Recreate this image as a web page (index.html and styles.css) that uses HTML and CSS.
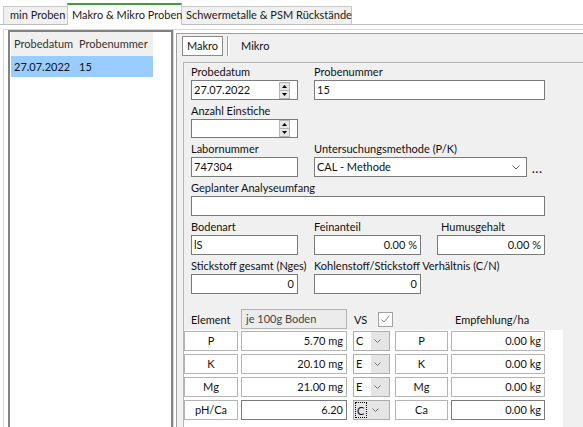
FILE: index.html
```html
<!DOCTYPE html>
<html lang="de">
<head>
    <meta charset="UTF-8">
    <title>Makro &amp; Mikro Proben</title>
    <link rel="stylesheet" href="styles.css">
</head>
<body>
    <div class="tabstrip">
        <div class="tab tab-first">min Proben</div>
        <div class="tab tab-active">Makro &amp; Mikro Proben</div>
        <div class="tab tab-last">Schwermetalle &amp; PSM Rückstände</div>
    </div>
    <div class="page">
        <div class="list">
            <div class="list-head"><span class="col-date">Probedatum</span><span>Probenummer</span></div>
            <div class="list-row selected"><span class="col-date">27.07.2022</span><span>15</span></div>
        </div>
        <div class="splitter"></div>
        <div class="panel">
            <div class="subtabs">
                <div class="subtab active">Makro</div>
                <div class="subtab-sep"></div>
                <div class="subtab">Mikro</div>
            </div>
            <div class="subpage">
                <div class="form">
                    <div class="row">
                        <div class="field">
                            <label>Probedatum</label>
                            <div class="input">
                                <span>27.07.2022</span>
                                <svg class="spin" width="11" height="17" viewBox="0 0 11 17">
                                    <rect x="0.5" y="0.5" width="10" height="16" fill="#e6e6e6" stroke="#b5b5b5"/>
                                    <line x1="0" y1="8.5" x2="11" y2="8.5" stroke="#b5b5b5"/>
                                    <polygon points="3,6 8,6 5.5,3" fill="#000"/>
                                    <polygon points="3,11 8,11 5.5,14" fill="#000"/>
                                </svg>
                            </div>
                        </div>
                        <div class="field wide">
                            <label>Probenummer</label>
                            <div class="input"><span>15</span></div>
                        </div>
                    </div>
                    <div class="row">
                        <div class="field">
                            <label>Anzahl Einstiche</label>
                            <div class="input short">
                                <span></span>
                                <svg class="spin" width="11" height="17" viewBox="0 0 11 17">
                                    <rect x="0.5" y="0.5" width="10" height="16" fill="#e6e6e6" stroke="#b5b5b5"/>
                                    <line x1="0" y1="8.5" x2="11" y2="8.5" stroke="#b5b5b5"/>
                                    <polygon points="3,6 8,6 5.5,3" fill="#000"/>
                                    <polygon points="3,11 8,11 5.5,14" fill="#000"/>
                                </svg>
                            </div>
                        </div>
                    </div>
                    <div class="row">
                        <div class="field">
                            <label>Labornummer</label>
                            <div class="input"><span>747304</span></div>
                        </div>
                        <div class="field wide">
                            <label>Untersuchungsmethode (P/K)</label>
                            <div class="select-line">
                                <div class="input select">
                                    <span>CAL - Methode</span>
                                    <svg class="chevron" width="8" height="5" viewBox="0 0 8 5">
                                        <polyline points="0.5,0.5 4,4 7.5,0.5" fill="none" stroke="#606060"/>
                                    </svg>
                                </div>
                                <span class="more">...</span>
                            </div>
                        </div>
                    </div>
                    <div class="row">
                        <div class="field full">
                            <label>Geplanter Analyseumfang</label>
                            <div class="input"><span></span></div>
                        </div>
                    </div>
                    <div class="row">
                        <div class="field">
                            <label>Bodenart</label>
                            <div class="input"><span>lS</span></div>
                        </div>
                        <div class="field">
                            <label>Feinanteil</label>
                            <div class="input num"><span>0.00 %</span></div>
                        </div>
                        <div class="field third">
                            <label class="indent">Humusgehalt</label>
                            <div class="input num"><span>0.00 %</span></div>
                        </div>
                    </div>
                    <div class="row">
                        <div class="field">
                            <label>Stickstoff gesamt (Nges)</label>
                            <div class="input num"><span>0</span></div>
                        </div>
                        <div class="field">
                            <label>Kohlenstoff/Stickstoff Verhältnis (C/N)</label>
                            <div class="input num"><span>0</span></div>
                        </div>
                    </div>
                </div>

                <div class="table-head">
                    <span class="th-element">Element</span>
                    <span class="unit-box">je 100g Boden</span>
                    <span class="th-vs">VS</span>
                    <svg class="check" width="15" height="15" viewBox="0 0 15 15">
                        <rect x="0.5" y="0.5" width="14" height="14" fill="#fff" stroke="#a0a0a0"/>
                        <polyline points="3.5,7.5 6,10 11.5,3.5" fill="none" stroke="#8c8c8c"/>
                    </svg>
                    <span class="th-empf">Empfehlung/ha</span>
                </div>

                <div class="table">
                    <div class="trow">
                        <div class="cell c-label">P</div>
                        <div class="cell c-val">5.70 mg</div>
                        <div class="combo">
                            <span class="combo-text">C</span>
                            <span class="combo-btn"><svg width="7" height="4" viewBox="0 0 7 4"><polyline points="0.5,0.5 3.5,3.5 6.5,0.5" fill="none" stroke="#707070"/></svg></span>
                        </div>
                        <div class="cell c-label2">P</div>
                        <div class="cell c-val2">0.00 kg</div>
                    </div>
                    <div class="trow">
                        <div class="cell c-label">K</div>
                        <div class="cell c-val">20.10 mg</div>
                        <div class="combo">
                            <span class="combo-text">E</span>
                            <span class="combo-btn"><svg width="7" height="4" viewBox="0 0 7 4"><polyline points="0.5,0.5 3.5,3.5 6.5,0.5" fill="none" stroke="#707070"/></svg></span>
                        </div>
                        <div class="cell c-label2">K</div>
                        <div class="cell c-val2">0.00 kg</div>
                    </div>
                    <div class="trow">
                        <div class="cell c-label">Mg</div>
                        <div class="cell c-val">21.00 mg</div>
                        <div class="combo">
                            <span class="combo-text">E</span>
                            <span class="combo-btn"><svg width="7" height="4" viewBox="0 0 7 4"><polyline points="0.5,0.5 3.5,3.5 6.5,0.5" fill="none" stroke="#707070"/></svg></span>
                        </div>
                        <div class="cell c-label2">Mg</div>
                        <div class="cell c-val2">0.00 kg</div>
                    </div>
                    <div class="trow">
                        <div class="cell c-label">pH/Ca</div>
                        <div class="cell c-val dark">6.20</div>
                        <div class="combo focus">
                            <span class="combo-text">C</span>
                            <span class="combo-btn"><svg width="7" height="4" viewBox="0 0 7 4"><polyline points="0.5,0.5 3.5,3.5 6.5,0.5" fill="none" stroke="#707070"/></svg></span>
                        </div>
                        <div class="cell c-label2">Ca</div>
                        <div class="cell c-val2 dark">0.00 kg</div>
                    </div>
                </div>
            </div>
        </div>
    </div>
</body>
</html>
```

FILE: styles.css
```css
body {
    margin: 0;
    width: 583px;
    height: 427px;
    overflow: hidden;
    background-color: #fff;
    font-family: Lato, "Liberation Sans", sans-serif;
    font-size: 11px;
    color: #111;
}

/* top tab strip */
.tabstrip {
    display: flex;
    align-items: flex-end;
    height: 21px;
    padding: 3px 0 0 3px;
    border-bottom: 1px solid #bdbdbd;
}
.tab {
    box-sizing: border-box;
    height: 18px;
    line-height: 16px;
    padding-left: 6px;
    background-color: #f0f0f0;
    border-top: 1px solid #c8c8c8;
    color: #1a1a1a;
    white-space: nowrap;
}
.tab-first {
    width: 64px;
    border-left: 1px solid #c8c8c8;
}
.tab-active {
    width: 115px;
    height: 22px;
    margin-bottom: -1px;
    padding-top: 2px;
    padding-left: 4px;
    background-color: #fff;
    border-top: 2px solid #3c9e3c;
    border-left: 1px solid #c8c8c8;
    border-right: 1px solid #c8c8c8;
}
.tab-last {
    width: 170px;
    padding-left: 4px;
    border-right: 1px solid #c8c8c8;
}

.page {
    display: flex;
    align-items: flex-start;
    height: 397px;
    overflow: hidden;
    margin: 4px 0 0 3px;
    border-top: 1px solid #d4d4d4;
    border-left: 1px solid #d4d4d4;
}

/* sample list on the left */
.list {
    box-sizing: border-box;
    width: 165px;
    height: 397px;
    margin-left: 4px;
    padding-left: 1px;
    background-color: #fff;
    border: 2px solid #828282;
    border-bottom: none;
}
.list-head, .list-row {
    display: flex;
    width: 142px;
    white-space: nowrap;
}
.list-head {
    height: 24px;
    line-height: 24px;
    background-color: #f0f0f0;
    color: #333;
}
.list-row {
    height: 21px;
    line-height: 21px;
}
.list-row.selected {
    background-color: #99ccff;
}
.col-date {
    box-sizing: border-box;
    width: 68px;
    padding-left: 3px;
}
.splitter {
    box-sizing: border-box;
    width: 3px;
    height: 397px;
    border-left: 1px solid #d9d9d9;
}

/* right panel */
.panel {
    flex: 1;
    height: 394px;
    margin-top: 3px;
    background-color: #f0f0f0;
    border-top: 1px solid #a0a0a0;
    border-left: 1px solid #a0a0a0;
}
.subtabs {
    box-sizing: border-box;
    display: flex;
    align-items: flex-start;
    height: 28px;
    padding: 2px 0 0 5px;
}
.subtab {
    line-height: 20px;
    margin-left: 12px;
}
.subtab.active {
    box-sizing: border-box;
    width: 41px;
    height: 20px;
    margin-left: 0;
    line-height: 18px;
    text-align: center;
    background-color: #fff;
    border: 1px solid #8a8a8a;
}
.subtab-sep {
    width: 0;
    height: 20px;
    margin-left: 4px;
    border-left: 1px solid #a0a0a0;
    border-right: 1px solid #fff;
}
.subpage {
    height: 365px;
    margin-left: 6px;
    border-top: 1px solid #b4b4b4;
    border-left: 1px solid #b4b4b4;
}

.form {
    display: flex;
    flex-direction: column;
    gap: 3px;
    padding: 1px 0 0 7px;
}
.row {
    display: flex;
    gap: 16px;
}
.field {
    display: flex;
    flex-direction: column;
    width: 107px;
}
.field.wide { width: 231px; }
.field.full { width: 354px; }
.field.third { width: 108px; }
.field label {
    height: 16px;
    line-height: 16px;
    white-space: nowrap;
}
.field label.indent {
    padding-left: 4px;
}
.input {
    box-sizing: border-box;
    display: flex;
    align-items: center;
    height: 20px;
    padding: 0 2px;
    line-height: 18px;
    background-color: #fff;
    border: 1px solid #7a7a7a;
    white-space: nowrap;
}
.input.short { height: 19px; }
.input.num { justify-content: flex-end; padding-right: 3px; }
.spin {
    margin-left: auto;
    margin-right: 5px;
}
.select-line {
    display: flex;
    align-items: flex-end;
}
.input.select {
    width: 213px;
}
.chevron {
    margin-left: auto;
    margin-right: 4px;
}
.more {
    margin-left: 5px;
    line-height: 16px;
    font-weight: bold;
    letter-spacing: 1px;
}

/* element table */
.table-head {
    display: flex;
    align-items: center;
    height: 20px;
    margin-top: 15px;
    padding-left: 7px;
    white-space: nowrap;
}
.th-element { width: 50px; }
.unit-box {
    box-sizing: border-box;
    width: 106px;
    height: 20px;
    padding-left: 4px;
    line-height: 18px;
    color: #444;
    background-color: #ececec;
    border: 1px solid #b4b4b4;
}
.th-vs {
    width: 24px;
    margin-left: 7px;
}
.th-empf { margin-left: 62px; }

.table {
    display: flex;
    flex-direction: column;
    gap: 3px;
    width: 379px;
    height: 96px;
    margin-top: 1px;
    padding-top: 1px;
    background-color: #fff;
}
.trow {
    display: flex;
    height: 20px;
}
.cell {
    box-sizing: border-box;
    height: 20px;
    line-height: 18px;
    white-space: nowrap;
    background-color: #fff;
    border: 1px solid #b4b4b4;
}
.cell.dark { border-color: #7a7a7a; }
.c-label { width: 54px; text-align: center; }
.c-val { width: 106px; margin-left: 3px; padding-right: 3px; text-align: right; }
.c-label2 { width: 53px; margin-left: 5px; text-align: center; }
.c-val2 { width: 94px; margin-left: 3px; padding-right: 3px; text-align: right; }
.combo {
    box-sizing: border-box;
    display: flex;
    width: 37px;
    height: 20px;
    margin-left: 6px;
    line-height: 18px;
    border: 1px solid #adadad;
    background-color: #e5e5e5;
}
.combo-text {
    box-sizing: border-box;
    width: 17px;
    padding-left: 2px;
    background-color: #fff;
}
.combo-btn {
    display: flex;
    align-items: center;
    padding-left: 3px;
}
.combo.focus .combo-text {
    width: 12px;
    height: 16px;
    margin: 1px 5px 0 1px;
    padding-left: 1px;
    line-height: 15px;
    background-color: #e5e5e5;
    border: 1px dotted #000;
}
.combo.focus .combo-btn {
    padding-left: 0;
}
```
